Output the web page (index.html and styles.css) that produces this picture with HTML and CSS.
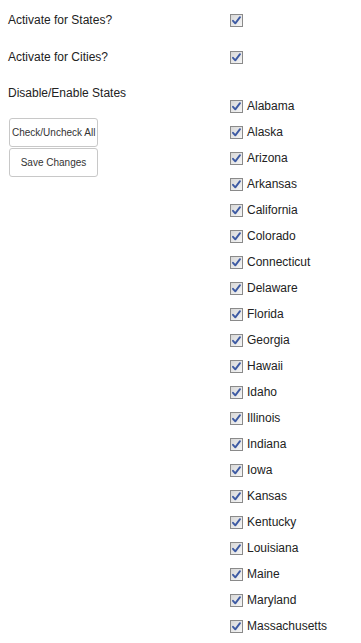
FILE: index.html
```html
<!DOCTYPE html>
<html>
<head>
<meta charset="utf-8">
<link rel="stylesheet" href="styles.css">
</head>
<body>
<div class="form">
  <div class="row">
    <div class="label">Activate for States?</div>
    <div class="field"><span class="cb"><svg viewBox="0 0 13 13" width="13" height="13"><rect x="0.5" y="0.5" width="12" height="12" fill="url(#g)" stroke="#8a8a8a"/><path d="M3 6.8 L5.3 9.3 L10 3.2" fill="none" stroke="#3d5aa3" stroke-width="1.9" stroke-linecap="round" stroke-linejoin="round"/></svg></span></div>
  </div>
  <div class="row">
    <div class="label">Activate for Cities?</div>
    <div class="field"><span class="cb"><svg viewBox="0 0 13 13" width="13" height="13"><rect x="0.5" y="0.5" width="12" height="12" fill="url(#g)" stroke="#8a8a8a"/><path d="M3 6.8 L5.3 9.3 L10 3.2" fill="none" stroke="#3d5aa3" stroke-width="1.9" stroke-linecap="round" stroke-linejoin="round"/></svg></span></div>
  </div>
  <div class="row row-states">
    <div class="label-col">
      <div class="label">Disable/Enable States</div>
      <div class="buttons">
        <button class="btn">Check/Uncheck All</button>
        <button class="btn">Save Changes</button>
      </div>
    </div>
    <ul class="list" id="list"></ul>
  </div>
</div>
<svg width="0" height="0" style="position:absolute"><defs><linearGradient id="g" x1="0" y1="0" x2="1" y2="1"><stop offset="0" stop-color="#d6d6d6"/><stop offset="1" stop-color="#f7f7f7"/></linearGradient></defs></svg>
<script>
var states=["Alabama","Alaska","Arizona","Arkansas","California","Colorado","Connecticut","Delaware","Florida","Georgia","Hawaii","Idaho","Illinois","Indiana","Iowa","Kansas","Kentucky","Louisiana","Maine","Maryland","Massachusetts"];
var ul=document.getElementById("list");
states.forEach(function(s){
  var li=document.createElement("li");
  li.innerHTML='<span class="cb"><svg viewBox="0 0 13 13" width="13" height="13"><rect x="0.5" y="0.5" width="12" height="12" fill="url(#g)" stroke="#8a8a8a"/><path d="M3 6.8 L5.3 9.3 L10 3.2" fill="none" stroke="#3d5aa3" stroke-width="1.9" stroke-linecap="round" stroke-linejoin="round"/></svg></span><span class="name">'+s+'</span>';
  ul.appendChild(li);
});
</script>
</body>
</html>
```
FILE: styles.css
```css
html, body {
  margin: 0;
  padding: 0;
  background: #ffffff;
}
body {
  font-family: "Liberation Sans", Arial, sans-serif;
  font-size: 12px;
  color: #222222;
  overflow: hidden;
}
.form {
  display: flex;
  flex-direction: column;
}
.row {
  display: flex;
  padding: 14px 0 10px 0;
}
.label {
  width: 222px;
  padding-left: 8px;
  line-height: 13px;
  height: 13px;
}
.field {
  display: flex;
}
.cb {
  display: block;
  width: 13px;
  height: 13px;
}
.cb svg {
  display: block;
}
.row-states {
  padding: 13px 0 0 0;
}
.label-col {
  width: 230px;
  display: flex;
  flex-direction: column;
}
.buttons {
  display: flex;
  flex-direction: column;
  align-items: flex-start;
  gap: 1px;
  margin-top: 18px;
  padding-left: 9px;
}
.btn {
  width: 89px;
  height: 29px;
  margin: 0;
  padding: 0 2px;
  border: 1px solid #c8c8c8;
  border-radius: 3px;
  background: #ffffff;
  font-family: "Liberation Sans", Arial, sans-serif;
  font-size: 10px;
  color: #333333;
  white-space: nowrap;
}
.list {
  list-style: none;
  margin: 13px 0 0 0;
  padding: 0;
  display: flex;
  flex-direction: column;
  gap: 13px;
}
.list li {
  display: flex;
  align-items: center;
  gap: 4px;
  height: 13px;
  line-height: 13px;
}
.name {
  font-size: 12px;
}
```
